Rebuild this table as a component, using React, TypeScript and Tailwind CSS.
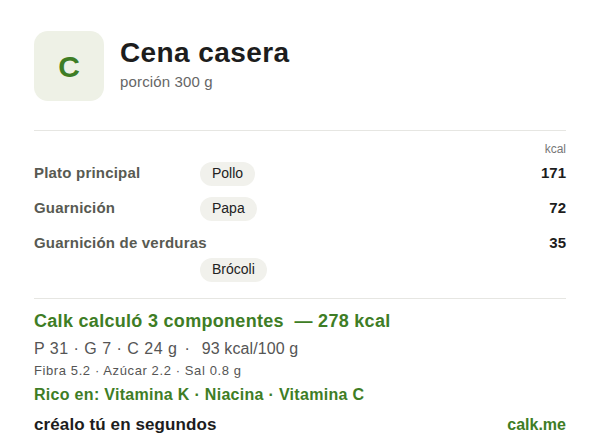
const ROWS = [
  { label: "Plato principal", item: "Pollo", kcal: 171, stacked: false },
  { label: "Guarnición", item: "Papa", kcal: 72, stacked: false },
  { label: "Guarnición de verduras", item: "Brócoli", kcal: 35, stacked: true },
];

function Pill({ children }: { children: React.ReactNode }) {
  return (
    <span className="inline-flex h-[24px] items-center rounded-full bg-[#f1f1ec] px-3 text-[14px] text-[#222]">
      {children}
    </span>
  );
}

export default function App() {
  return (
    <div className="min-h-[447px] w-[600px] bg-white px-[34px] pt-[31px] font-['Liberation_Sans',Arial,sans-serif]">
      <div className="flex items-center gap-4">
        <div className="flex h-[70px] w-[70px] items-center justify-center rounded-[14px] bg-[#eef1e6]">
          <span className="text-[30px] font-bold text-[#3e7d25]">C</span>
        </div>
        <div className="-mt-[5px]">
          <h1 className="text-[28px] leading-[32px] font-bold tracking-[0.4px] text-[#1d1d1d]">
            Cena casera
          </h1>
          <p className="mt-[4px] text-[15px] leading-[18px] tracking-[0.15px] text-[#666]">
            porción 300 g
          </p>
        </div>
      </div>

      <div className="mt-[29px] border-t border-[#e6e6e2]" />

      <div className="mt-[11px] text-right text-[12px] leading-[14px] text-[#777]">kcal</div>

      <div>
        {ROWS.map((row) =>
          row.stacked ? (
            <div key={row.label} className="pt-[5px]">
              <div className="flex h-[24px] items-center justify-between">
                <span className="text-[15px] font-bold tracking-[0.2px] text-[#585a52]">{row.label}</span>
                <span className="text-[15px] font-bold text-[#1d1d1d]">{row.kcal}</span>
              </div>
              <div className="mt-[2px] pl-[166px]">
                <Pill>{row.item}</Pill>
              </div>
            </div>
          ) : (
            <div key={row.label} className="flex h-[35px] items-center">
              <span className="w-[166px] text-[15px] font-bold tracking-[0.2px] text-[#585a52]">
                {row.label}
              </span>
              <Pill>{row.item}</Pill>
              <span className="ml-auto text-[15px] font-bold text-[#1d1d1d]">{row.kcal}</span>
            </div>
          ),
        )}
      </div>

      <div className="mt-[16px] border-t border-[#e6e6e2]" />

      <div className="mt-[11px] text-[18px] leading-[22px] font-bold tracking-[0.3px] text-[#3e7d25]">
        Calk calculó 3 componentes&nbsp; — 278 kcal
      </div>
      <div className="mt-[7px] flex text-[16px] leading-[20px] text-[#555]">
        <span className="tracking-[0.5px]">P 31 · G 7 · C 24 g</span>
        <span className="mr-[12px] ml-[7px]">·</span>
        <span className="tracking-[0.1px]">93 kcal/100 g</span>
      </div>
      <div className="mt-[4px] text-[13px] leading-[16px] tracking-[0.6px] text-[#555]">
        Fibra 5.2 · Azúcar 2.2 · Sal 0.8 g
      </div>
      <div className="mt-[6px] text-[16px] leading-[20px] font-bold tracking-[0.3px] text-[#3e7d25]">
        Rico en: Vitamina K · Niacina · Vitamina C
      </div>
      <div className="mt-[10px] flex items-center justify-between leading-[20px]">
        <span className="text-[17px] font-bold tracking-[0.1px] text-[#1d1d1d]">créalo tú en segundos</span>
        <span className="text-[16px] font-bold text-[#3e7d25]">calk.me</span>
      </div>
    </div>
  );
}
